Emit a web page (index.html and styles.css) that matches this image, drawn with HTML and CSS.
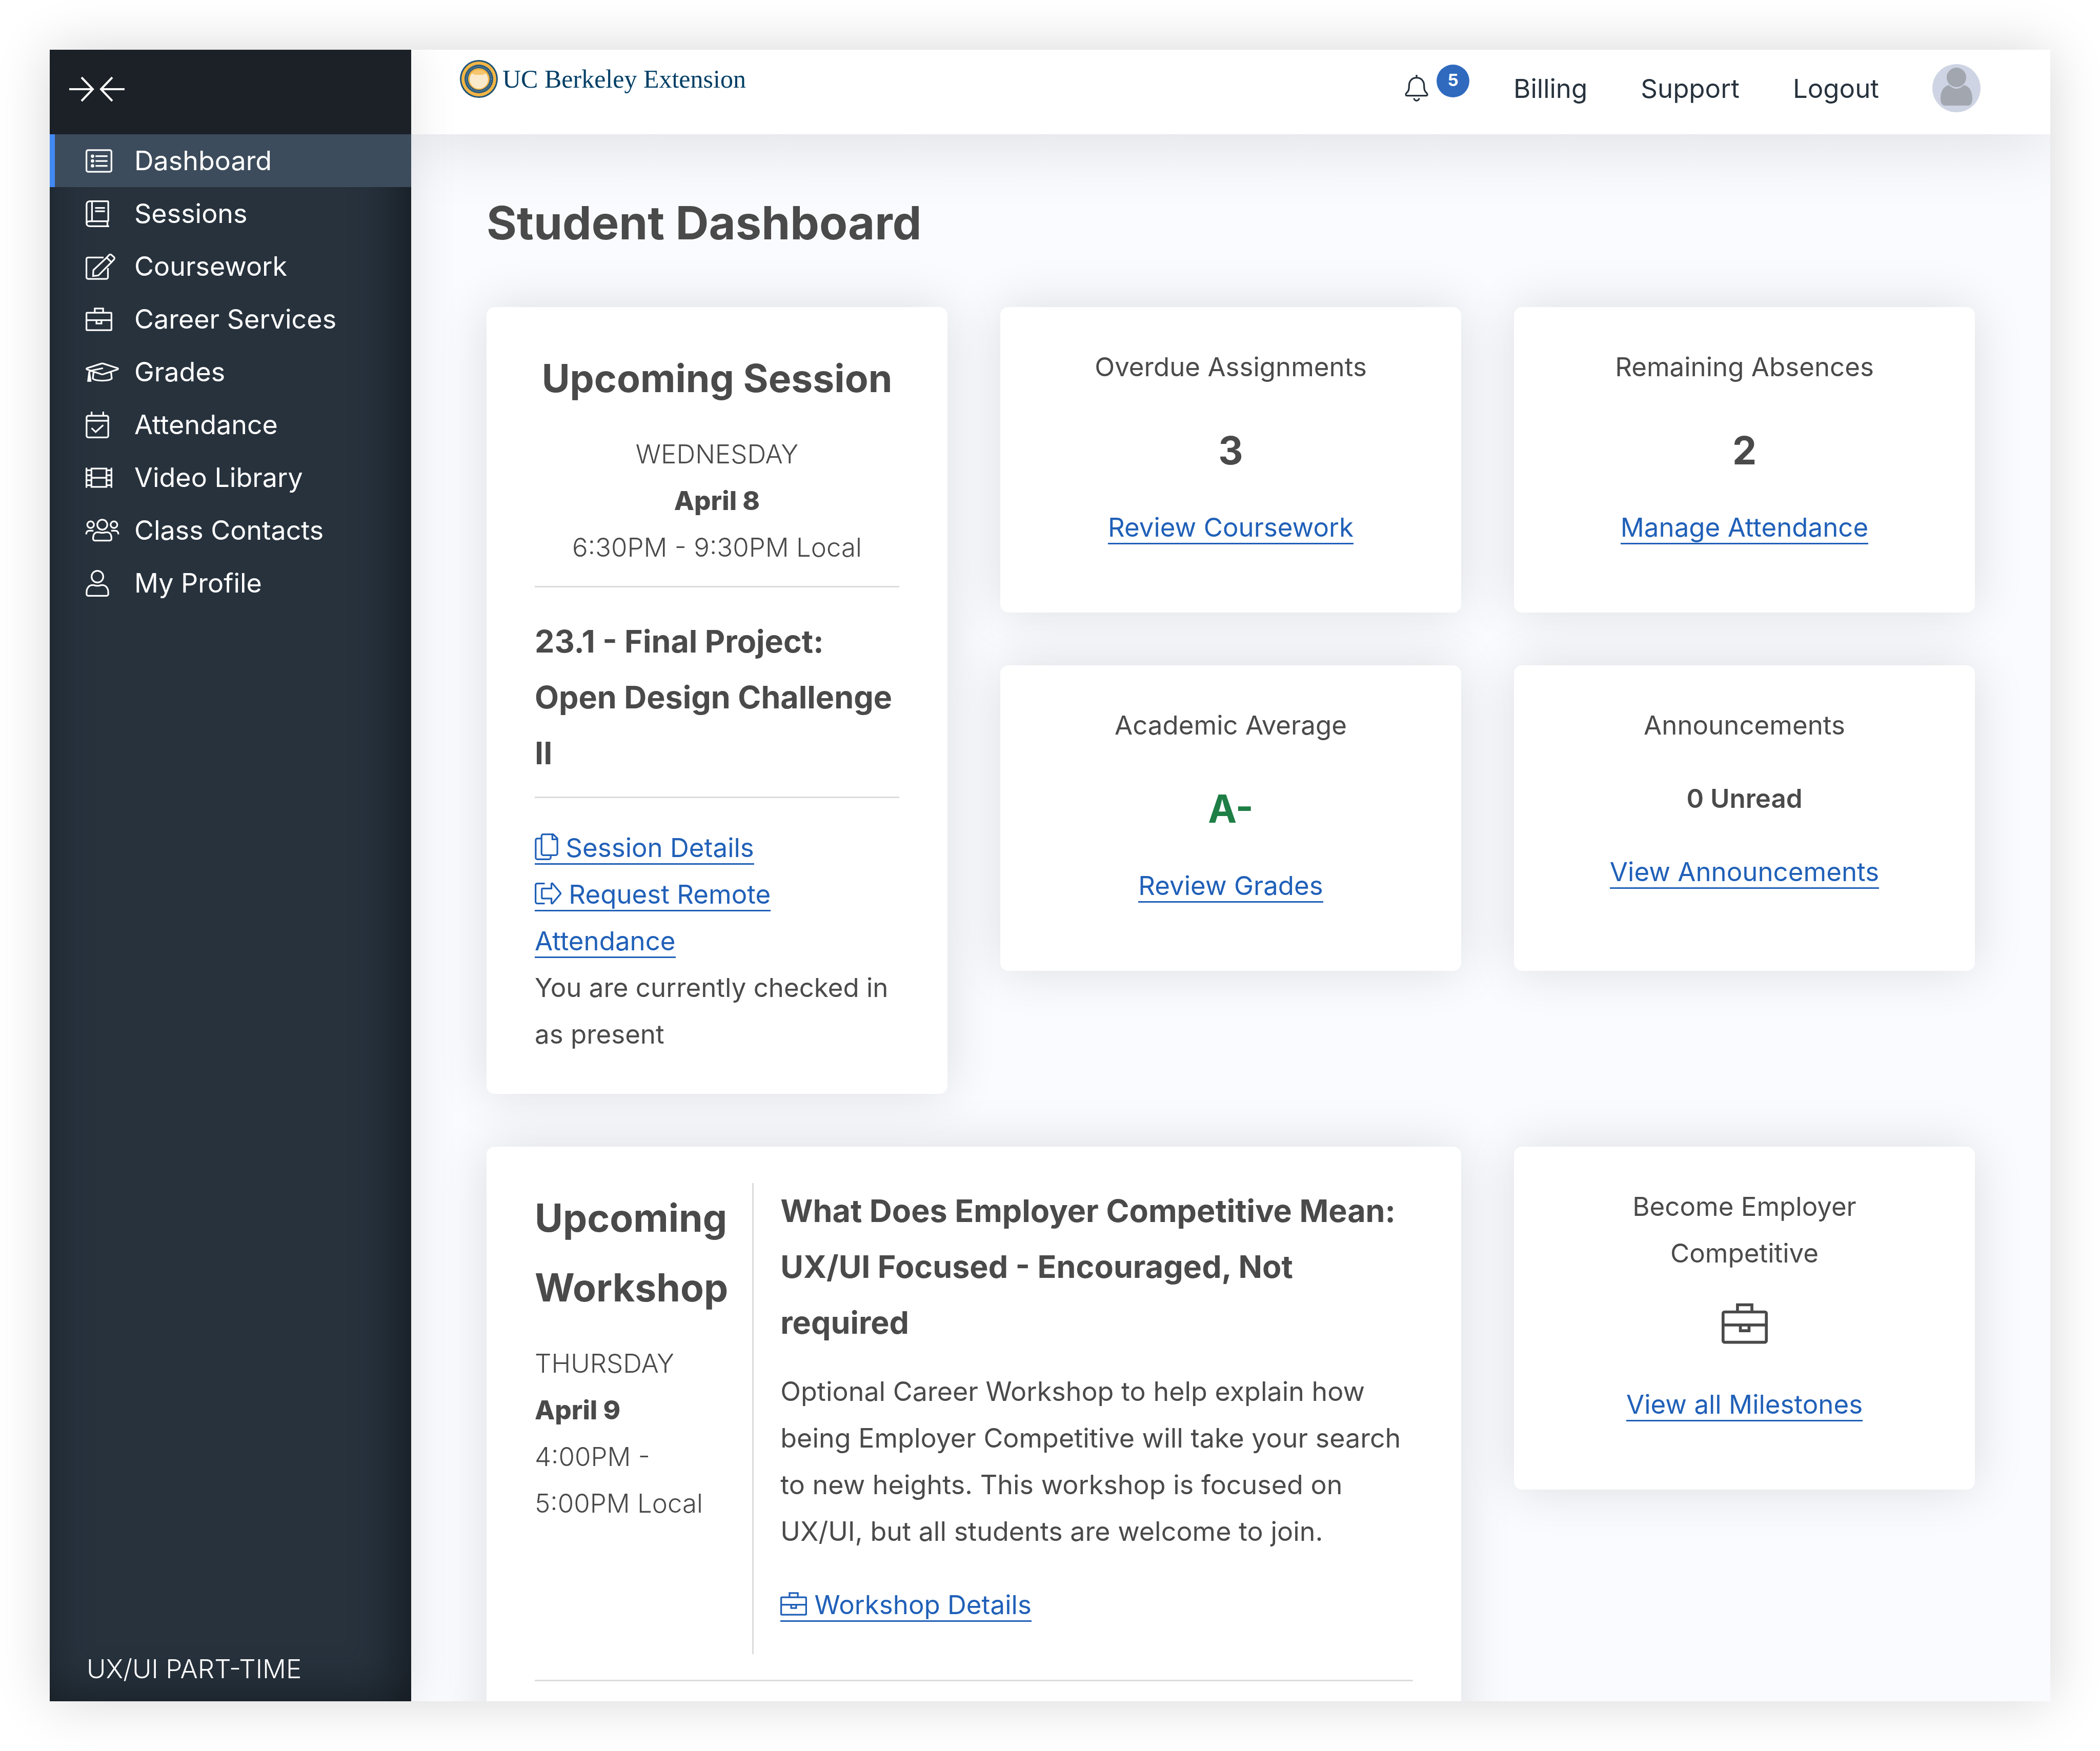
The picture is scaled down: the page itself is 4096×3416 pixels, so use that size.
FILE: index.html
```html
<!DOCTYPE html>
<html lang="en">
<head>
<meta charset="utf-8">
<meta name="viewport" content="width=device-width, initial-scale=1">
<title>Student Dashboard</title>
<link rel="stylesheet" href="styles.css">
</head>
<body>
<svg class="sprite" aria-hidden="true">
  <symbol id="i-briefcase" viewBox="0 0 512 512"><path d="M32 128H480a16 16 0 0 1 16 16V448a16 16 0 0 1-16 16H32a16 16 0 0 1-16-16V144a16 16 0 0 1 16-16zM176 128V48H336V128M16 272H496M208 272V336H304V272"/></symbol>
</svg>
<div class="window">
  <aside class="sidebar">
    <div class="sidebar-top">
      <button class="collapse" type="button" aria-label="Collapse menu">
        <svg viewBox="0 0 112 52"><path d="M2 26H48M26 3L48 26L26 49M110 26H64M86 3L64 26L86 49"/></svg>
      </button>
    </div>
    <nav class="menu" aria-label="Main">
      <a class="menu-item active" href="#"><span class="slot"><svg class="icon" viewBox="0 0 512 512"><rect x="16" y="48" width="480" height="416" rx="32"/><path d="M190 164H420M190 256H420M190 350H420"/><path class="dots" d="M132 164h1M132 256h1M132 350h1"/></svg></span>Dashboard</a>
      <a class="menu-item" href="#"><span class="slot"><svg class="icon narrow" viewBox="0 0 448 512"><path d="M448 496H80A64 48 0 0 1 16 448V72A64 56 0 0 1 80 16H416a16 16 0 0 1 16 16V384a16 16 0 0 1-16 16H72A56 48 0 0 0 16 448M120 16V400M416 400V496M180 144H368M180 208H368"/></svg></span>Sessions</a>
      <a class="menu-item" href="#"><span class="slot"><svg class="icon mid" viewBox="0 0 576 512"><path d="M348 80H48a32 32 0 0 0-32 32V464a32 32 0 0 0 32 32H400a32 32 0 0 0 32-32V285M407 84L452 34Q474 10 500 30L548 72Q572 94 548 120L500 172L247 428L144 440L150 326ZM407 84L500 172"/></svg></span>Coursework</a>
      <a class="menu-item" href="#"><span class="slot"><svg class="icon" viewBox="0 0 512 512"><use href="#i-briefcase"/></svg></span>Career Services</a>
      <a class="menu-item" href="#"><span class="slot"><svg class="icon wide" viewBox="0 0 640 512"><path d="M28 180L300 92Q320 86 340 92L612 180Q636 192 612 204L340 296Q320 302 300 296L28 204Q4 192 28 180M334 180L110 226Q76 236 70 262M152 256L138 380C180 432 460 432 502 380L488 256"/><path d="M70 250L48 424H94Z" fill="currentColor"/></svg></span>Grades</a>
      <a class="menu-item" href="#"><span class="slot"><svg class="icon narrow" viewBox="0 0 448 512"><path d="M48 80H400a32 32 0 0 1 32 32V464a32 32 0 0 1-32 32H48a32 32 0 0 1-32-32V112a32 32 0 0 1 32-32zM16 176H432M112 0V80M336 0V80M112 316L190 392L336 258"/></svg></span>Attendance</a>
      <a class="menu-item" href="#"><span class="slot"><svg class="icon" viewBox="0 0 512 512"><path d="M16 64V448M496 64V448M112 80H400V432H112zM112 256H400M16 112H112M16 208H112M16 304H112M16 400H112M400 112H496M400 208H496M400 304H496M400 400H496"/></svg></span>Video Library</a>
      <a class="menu-item" href="#"><span class="slot"><svg class="icon wide" viewBox="0 0 640 512"><circle cx="320" cy="144" r="96"/><circle cx="96" cy="144" r="64"/><circle cx="544" cy="144" r="64"/><path d="M144 400C144 330 180 288 232 288C270 288 280 300 320 300C360 300 370 288 408 288C460 288 496 330 496 400V416a32 32 0 0 1-32 32H176a32 32 0 0 1-32-32zM12 330C12 280 36 260 72 260H150M628 330C628 280 604 260 568 260H490"/></svg></span>Class Contacts</a>
      <a class="menu-item" href="#"><span class="slot"><svg class="icon narrow" viewBox="0 0 448 512"><circle cx="224" cy="128" r="112"/><path d="M16 430C16 350 62 290 134 290C170 290 180 304 224 304C268 304 278 290 314 290C386 290 432 350 432 430V464a32 32 0 0 1-32 32H48a32 32 0 0 1-32-32z"/></svg></span>My Profile</a>
    </nav>
    <p class="program">UX/UI PART-TIME</p>
  </aside>

  <div class="page">
    <header class="topbar">
      <a class="brand" href="#">
        <svg class="seal" viewBox="0 0 76 76"><circle cx="38" cy="38" r="37" fill="#1f5478"/><circle cx="38" cy="38" r="34" fill="#f3b544"/><circle cx="38" cy="38" r="28" fill="#2b5b7c"/><circle cx="38" cy="38" r="24" fill="none" stroke="#6f8b9c" stroke-width="2" stroke-dasharray="2 2"/><circle cx="38" cy="38" r="21" fill="#f3b544"/><circle cx="38" cy="39" r="18" fill="#fbe9cb"/><path d="M24 27Q38 14 52 27L46 30H30Z" fill="#f6c670"/></svg>
        <span>UC Berkeley Extension</span>
      </a>
      <nav class="toplinks" aria-label="Account">
        <a class="bell" href="#" aria-label="Notifications">
          <svg class="icon narrow" viewBox="0 0 448 512"><path d="M224 0V56M224 56C130 56 80 124 80 208C80 300 60 324 26 356C6 376 18 400 40 400H408C430 400 442 376 422 356C388 324 368 300 368 208C368 124 318 56 224 56zM176 448a48 48 0 0 0 96 0"/></svg>
          <span class="badge">5</span>
        </a>
        <a href="#">Billing</a>
        <a href="#">Support</a>
        <a href="#">Logout</a>
        <a class="avatar" href="#" aria-label="Profile"><svg viewBox="0 0 94 94"><circle cx="47" cy="47" r="47" fill="#ced4e3"/><path d="M33 41C20 43 16 56 16 68C16 76 20 81 24 81H70C74 81 78 76 78 68C78 56 74 43 61 41Q55 48 47 48Q39 48 33 41Z" fill="#a2a6af"/><circle cx="47" cy="26" r="20" fill="#a2a6af" stroke="#ced4e3" stroke-width="2"/></svg></a>
      </nav>
    </header>

    <main class="content">
      <h1>Student Dashboard</h1>
      <div class="board">
        <section class="card session">
          <h2 class="center">Upcoming Session</h2>
          <p class="light center">WEDNESDAY</p>
          <p class="date center">April 8</p>
          <p class="light center">6:30PM - 9:30PM Local</p>
          <hr>
          <h3>23.1 - Final Project: Open Design Challenge II</h3>
          <hr>
          <p><a class="link" href="#"><svg class="inline-icon copy" viewBox="0 0 448 512"><path d="M304 416V464a32 32 0 0 1-32 32H48a32 32 0 0 1-32-32V128a32 32 0 0 1 32-32H128M160 16H352L432 96V384a32 32 0 0 1-32 32H160a32 32 0 0 1-32-32V48a32 32 0 0 1 32-32zM336 16V112H432"/></svg> Session Details</a></p>
          <p><a class="link" href="#"><svg class="inline-icon" viewBox="0 0 512 512"><path d="M192 64H48a32 32 0 0 0-32 32V416a32 32 0 0 0 32 32H192M320 72a12 12 0 0 1 20-8L490 242a20 20 0 0 1 0 28L340 448a12 12 0 0 1-20-8V352H152a16 16 0 0 1-16-16V176a16 16 0 0 1 16-16H320z"/></svg> Request Remote Attendance</a></p>
          <p>You are currently checked in as present</p>
        </section>

        <div class="stats">
          <section class="card stat">
            <p>Overdue Assignments</p>
            <p class="number">3</p>
            <p><a class="link" href="#">Review Coursework</a></p>
          </section>
          <section class="card stat">
            <p>Remaining Absences</p>
            <p class="number">2</p>
            <p><a class="link" href="#">Manage Attendance</a></p>
          </section>
          <section class="card stat">
            <p>Academic Average</p>
            <p class="number grade">A-</p>
            <p><a class="link" href="#">Review Grades</a></p>
          </section>
          <section class="card stat">
            <p>Announcements</p>
            <p class="unread">0 Unread</p>
            <p><a class="link" href="#">View Announcements</a></p>
          </section>
        </div>

        <section class="card workshop">
          <div class="workshop-row">
            <div class="workshop-when">
              <h2>Upcoming Workshop</h2>
              <p class="light">THURSDAY</p>
              <p class="date">April 9</p>
              <p class="light">4:00PM - 5:00PM Local</p>
            </div>
            <div class="workshop-what">
              <h3>What Does Employer Competitive Mean: UX/UI Focused - Encouraged, Not required</h3>
              <p class="about">Optional Career Workshop to help explain how being Employer Competitive will take your search to new heights. This workshop is focused on UX/UI, but all students are welcome to join.</p>
              <p><a class="link" href="#"><svg class="inline-icon" viewBox="0 0 512 512"><use href="#i-briefcase"/></svg> Workshop Details</a></p>
            </div>
          </div>
          <hr>
        </section>

        <section class="card stat employer">
          <p>Become Employer Competitive</p>
          <svg class="big-icon" viewBox="0 0 512 512"><use href="#i-briefcase"/></svg>
          <p><a class="link" href="#">View all Milestones</a></p>
        </section>
      </div>
    </main>
  </div>
</div>
</body>
</html>
```
FILE: styles.css
```css
* { box-sizing: border-box; }

body {
  margin: 0;
  padding: 97px;
  background: #fff;
  color: #4a4a4a;
  font-family: Inter, "Liberation Sans", sans-serif;
  font-size: 51px;
  line-height: 91px;
}

h1, h2, h3, p { margin: 0; }
h1 { font-size: 90px; line-height: 162px; font-weight: 700; margin-bottom: 83px; }
h2 { font-size: 75px; line-height: 136px; font-weight: 700; margin-bottom: 34px; }
h3 { font-size: 61px; line-height: 109px; font-weight: 700; }
a { color: inherit; text-decoration: none; }

svg { fill: none; stroke: currentColor; stroke-width: 32; }
.sprite { position: absolute; width: 0; height: 0; }

.window {
  display: flex;
  height: calc(100vh - 194px);
  overflow: hidden;
  box-shadow: 0 0 100px rgba(0, 0, 0, .16);
}

/* Sidebar */
.sidebar {
  flex: none;
  width: 705px;
  display: flex;
  flex-direction: column;
  color: #fff;
  background: #27323d;
  box-shadow: inset -20px 0 90px #141a20, 0 0 90px rgba(0, 0, 0, .1);
  position: relative;
  z-index: 2;
}
.sidebar-top {
  height: 165px;
  padding: 51px 36px;
  background: #1b2127;
}
.collapse {
  display: block;
  padding: 0;
  border: 0;
  background: none;
  color: #fff;
}
.collapse svg { display: block; width: 112px; height: 52px; stroke-width: 4; }
.menu-item {
  display: flex;
  align-items: center;
  height: 103px;
  padding-left: 70px;
  font-size: 52px;
}
.menu-item.active {
  background: #3c4c5c;
  box-shadow: inset 10px 0 #4289f4;
}
.slot { display: flex; flex: none; width: 95px; }
.icon { width: 52px; height: 52px; overflow: visible; }
.icon.narrow { width: 46px; }
.icon.mid { width: 58px; }
.icon.wide { width: 65px; }
.dots { stroke-width: 64; stroke-linecap: round; }
.program { margin-top: auto; padding: 0 72px 18px; font-weight: 300; }

/* Page */
.page { flex: 1; min-width: 0; background: #fafbfe; }
.topbar {
  display: flex;
  justify-content: space-between;
  align-items: flex-start;
  height: 165px;
  padding: 19px 136px 0 94px;
  background: #fff;
  box-shadow: 0 0 150px rgba(0, 0, 0, .15);
  color: #27323d;
}
.brand {
  display: flex;
  align-items: center;
  gap: 8px;
  color: #003f66;
  font: 50px/76px "Liberation Serif", serif;
}
.seal { width: 76px; height: 76px; stroke: none; }
.toplinks { display: flex; align-items: center; padding-top: 9px; }
.toplinks a + a { margin-left: 104px; }
.toplinks .bell + a { margin-left: 86px; }
.bell { display: flex; align-items: center; gap: 16px; }
.badge {
  width: 64px;
  height: 64px;
  margin-bottom: 28px;
  border-radius: 50%;
  background: #2f6abf;
  color: #fff;
  font-size: 33px;
  line-height: 60px;
  font-weight: 700;
  text-align: center;
}
.avatar svg { display: block; width: 94px; height: 94px; stroke: none; }

.content { padding: 92px 147px; }
.board {
  display: grid;
  grid-template-columns: repeat(3, minmax(0, 1fr));
  gap: 103px;
  align-items: start;
}
.card {
  padding: 71px 94px;
  border-radius: 16px;
  background: #fff;
  box-shadow: 0 0 100px rgba(0, 0, 0, .12);
}
.center { text-align: center; }
.light { font-weight: 300; }
.date { font-weight: 800; }
hr { margin: 30px 0 51px; border: 0; border-top: 3px solid #dcdcdc; }
.link { color: #2060b8; border-bottom: 3px solid #2060b8; }
.inline-icon { width: 52px; height: 52px; margin-bottom: -6px; overflow: visible; }
.inline-icon.copy { width: 46px; }

.stats {
  grid-column: span 2;
  display: grid;
  grid-template-columns: repeat(2, minmax(0, 1fr));
  gap: 103px;
}
.stat { padding-bottom: 121px; text-align: center; }
.number { margin: 50px 0 36px; font-size: 75px; line-height: 136px; font-weight: 700; }
.grade { color: #1e7e45; }
.unread { margin: 52px 0; font-weight: 600; }

.workshop { grid-column: span 2; }
.workshop-row { display: grid; grid-template-columns: min-content 1fr; }
.workshop-when { padding-right: 47px; border-right: 3px solid #dcdcdc; }
.workshop-what { padding: 0 0 51px 52px; }
.about { margin: 34px 0 52px; font-size: 52px; }
.workshop hr { margin-top: 50px; }
.big-icon { display: block; width: 90px; height: 90px; margin: 47px auto 67px; }
```
